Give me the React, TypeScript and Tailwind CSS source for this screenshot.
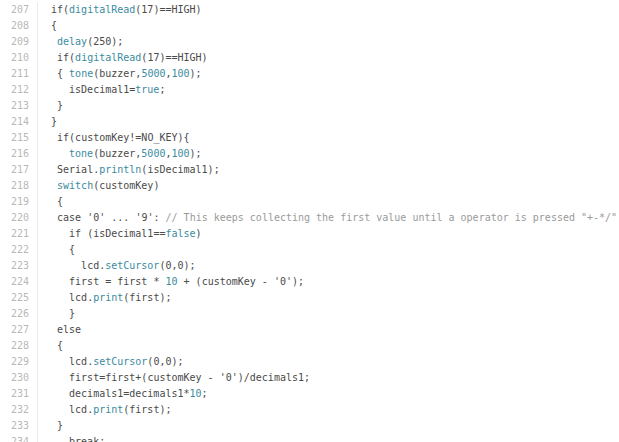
import React from 'react';

const lines: string[] = [
  'if(digitalRead(17)==HIGH)',
  '{',
  ' delay(250);',
  ' if(digitalRead(17)==HIGH)',
  ' { tone(buzzer,5000,100);',
  '   isDecimal1=true;',
  ' }',
  '}',
  ' if(customKey!=NO_KEY){',
  '   tone(buzzer,5000,100);',
  ' Serial.println(isDecimal1);',
  ' switch(customKey)',
  ' {',
  ' case \'0\' ... \'9\': // This keeps collecting the first value until a operator is pressed "+-*/"',
  '   if (isDecimal1==false)',
  '   {',
  '     lcd.setCursor(0,0);',
  '   first = first * 10 + (customKey - \'0\');',
  '   lcd.print(first);',
  '   }',
  ' else',
  ' {',
  '   lcd.setCursor(0,0);',
  '   first=first+(customKey - \'0\')/decimals1;',
  '   decimals1=decimals1*10;',
  '   lcd.print(first);',
  ' }',
  '   break;',
];

const tealWords = new Set(['digitalRead', 'delay', 'tone', 'true', 'false', 'println', 'print', 'setCursor', 'switch']);
const tealNumbers = new Set(['5000', '100', '10']);

function highlight(src: string) {
  const out: React.ReactNode[] = [];
  const re = /(\/\/.*$)|([A-Za-z_]\w*)|(\d+)|(\s+)|(.)/g;
  let m: RegExpExecArray | null;
  let i = 0;
  while ((m = re.exec(src)) !== null) {
    const t = m[0];
    if (m[1]) {
      out.push(<span key={i++} className="text-[#9a9a9a]">{t}</span>);
    } else if ((m[2] && tealWords.has(t)) || (m[3] && tealNumbers.has(t))) {
      out.push(<span key={i++} className="text-[#3a8b9e]">{t}</span>);
    } else {
      out.push(<span key={i++}>{t}</span>);
    }
  }
  return out;
}

const App: React.FC = () => {
  return (
    <div className="w-[619px] h-[442px] overflow-hidden bg-white pt-[2px] font-['DejaVu_Sans_Mono',monospace] text-[10px] text-[#4a4a4a]">
      {lines.map((code, idx) => (
        <div key={idx} className="flex h-4 leading-4">
          <div className="w-[38px] shrink-0 pr-2 text-right text-[#b8b8b8] border-r border-[#ececec]">
            {207 + idx}
          </div>
          <div className="pl-[13px] whitespace-pre">{highlight(code)}</div>
        </div>
      ))}
    </div>
  );
};

export default App;
